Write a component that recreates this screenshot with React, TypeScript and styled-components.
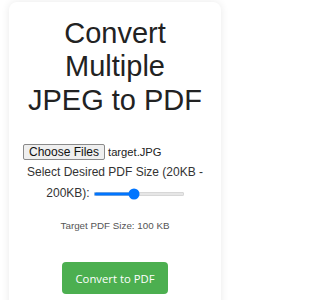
import React from 'react';
import styled, { createGlobalStyle } from 'styled-components';

const Global = createGlobalStyle`
  html, body { margin:0; padding:0; background:#fff; }
  body { font-family:"Liberation Sans", Arial, sans-serif; }
`;

const Page = styled.div`padding:2px 0 0 9px;`;
const Card = styled.div`width:212px;box-sizing:border-box;padding:15px 14px 24px;background:#fff;border-radius:8px;box-shadow:0 0 8px rgba(0,0,0,0.09);text-align:center;`;
const Title = styled.h1`margin:0;padding:0 4px;font-size:29px;line-height:33.4px;font-weight:400;color:#222;`;
const FileRow = styled.div`display:flex;align-items:center;height:16px;margin-top:27px;text-align:left;`;
const FileButton = styled.button`font-family:"Liberation Sans", Arial, sans-serif;font-size:12px;line-height:13px;padding:0 5px;height:15.5px;color:#111;background:#efefef;border:1px solid #8a8a8a;border-radius:2px;`;
const FileName = styled.span`margin-left:3px;font-size:11.2px;color:#222;`;
const Label = styled.div`margin-top:1.5px;font-size:12px;line-height:21px;color:#333;`;
const Slider = styled.span`position:relative;display:inline-flex;align-items:center;width:90px;height:12px;margin-left:4px;vertical-align:middle;`;
const Track = styled.span`flex:1;height:4px;border-radius:2px;box-shadow:inset 0 0 0 0.5px #c8c8c8;`;
const Thumb = styled.span`position:absolute;top:50%;width:11px;height:11px;border-radius:50%;background:#0075ff;transform:translate(-50%,-50%);`;
const Target = styled.div`margin-top:16.5px;font-size:9.8px;line-height:12px;color:#555;`;
const Convert = styled.button`margin-top:30px;height:32px;padding:0 14px;font-family:"Open Sans", sans-serif;font-size:11.3px;color:#fff;background:#4caf50;border:none;border-radius:4px;`;

const RangeSlider: React.FC<{ min: number; max: number; value: number }> = ({ min, max, value }) => {
  const frac = (value - min) / (max - min);
  const thumbAt = 5.5 + frac * (90 - 11);
  const pct = (thumbAt / 90) * 100;
  return (
    <Slider>
      <Track style={{ background: `linear-gradient(to right, #0075ff ${pct}%, #e6e6e6 ${pct}%)` }} />
      <Thumb style={{ left: `${thumbAt}px` }} />
    </Slider>
  );
};

const App: React.FC = () => (
  <>
    <Global />
    <Page>
      <Card>
        <Title>Convert Multiple JPEG to PDF</Title>
        <FileRow>
          <FileButton>Choose Files</FileButton>
          <FileName>target.JPG</FileName>
        </FileRow>
        <Label>
          Select Desired PDF Size (20KB - 200KB):<RangeSlider min={20} max={200} value={100} />
        </Label>
        <Target>Target PDF Size: 100 KB</Target>
        <Convert>Convert to PDF</Convert>
      </Card>
    </Page>
  </>
);

export default App;
